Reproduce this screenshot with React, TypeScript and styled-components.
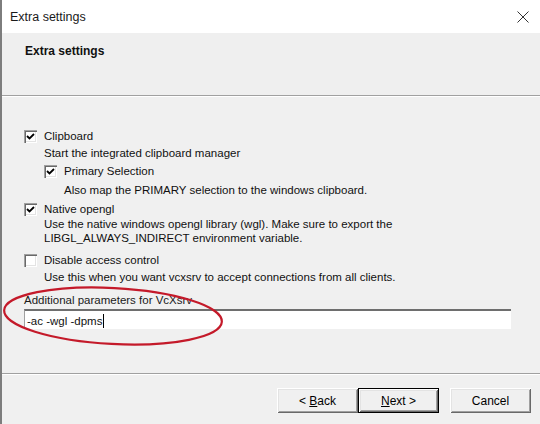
import styled, { createGlobalStyle } from 'styled-components';

const GlobalStyle = createGlobalStyle`
  html, body {
    margin: 0;
    padding: 0;
    background: #f0f0f0;
  }
  body {
    font-family: "Liberation Sans", Arial, sans-serif;
    font-size: 11.5px;
    color: #111;
  }
`;

type Option = {
  label: string;
  checked: boolean;
  indent: number;
  space: number;
  descGap: number;
  lines: string[];
};

const options: Option[] = [
  {
    label: 'Clipboard',
    checked: true,
    indent: 0,
    space: 0,
    descGap: 2,
    lines: ['Start the integrated clipboard manager'],
  },
  {
    label: 'Primary Selection',
    checked: true,
    indent: 20,
    space: 3,
    descGap: 4,
    lines: ['Also map the PRIMARY selection to the windows clipboard.'],
  },
  {
    label: 'Native opengl',
    checked: true,
    indent: 0,
    space: 4,
    descGap: 0,
    lines: [
      'Use the native windows opengl library (wgl). Make sure to export the',
      'LIBGL_ALWAYS_INDIRECT environment variable.',
    ],
  },
  {
    label: 'Disable access control',
    checked: false,
    indent: 0,
    space: 7,
    descGap: 2,
    lines: ['Use this when you want vcxsrv to accept connections from all clients.'],
  },
];

const App = () => {
  return (
    <>
      <GlobalStyle />
      <Window>
        <TitleBar>
          <WindowTitle>Extra settings</WindowTitle>
          <CloseButton>
            <svg width="12" height="12" viewBox="0 0 12 12">
              <path d="M0.5 0.5 L11.5 11.5 M11.5 0.5 L0.5 11.5" stroke="#333" strokeWidth="1" />
            </svg>
          </CloseButton>
        </TitleBar>

        <Header>
          <HeaderTitle>Extra settings</HeaderTitle>
        </Header>

        <Content>
          {options.map((opt) => (
            <OptionBlock key={opt.label} $indent={opt.indent} $space={opt.space}>
              <CheckRow>
                <CheckBox>
                  {opt.checked && (
                    <svg width="9" height="9" viewBox="0 0 9 9">
                      <path d="M1 4 L3.5 6.5 L8 2" stroke="#000" strokeWidth="1.8" fill="none" />
                    </svg>
                  )}
                </CheckBox>
                <Label>{opt.label}</Label>
              </CheckRow>
              <DescList $gap={opt.descGap}>
                {opt.lines.map((line) => (
                  <Description key={line}>{line}</Description>
                ))}
              </DescList>
            </OptionBlock>
          ))}

          <ParamLabel>Additional parameters for VcXsrv</ParamLabel>
          <ParamField>
            -ac -wgl -dpms
            <Caret />
          </ParamField>
        </Content>

        <Footer>
          <WizardButton>
            &lt; <u>B</u>ack
          </WizardButton>
          <WizardButton $default>
            <u>N</u>ext &gt;
          </WizardButton>
          <WizardButton $space={11}>Cancel</WizardButton>
        </Footer>

        <Highlight width="540" height="424" viewBox="0 0 540 424">
          <ellipse
            cx="113"
            cy="316"
            rx="109"
            ry="28"
            fill="none"
            stroke="#c41a2a"
            strokeWidth="2.2"
            transform="rotate(3 113 316)"
          />
        </Highlight>
      </Window>
    </>
  );
};

export default App;

const Window = styled.div`
  position: relative;
  width: 540px;
  height: 424px;
  box-sizing: border-box;
  border-left: 2px solid #7d7d7d;
  background: #f0f0f0;
  display: flex;
  flex-direction: column;
  overflow: hidden;
`;

const TitleBar = styled.div`
  height: 33px;
  flex-shrink: 0;
  background: #fff;
  display: flex;
  align-items: center;
  justify-content: space-between;
  padding: 0 11px 0 8px;
`;

const WindowTitle = styled.span`
  font-size: 12.5px;
  color: #1a1a1a;
`;

const CloseButton = styled.span`
  display: flex;
  width: 12px;
  height: 12px;
`;

const Header = styled.div`
  height: 63px;
  flex-shrink: 0;
  background: #efefef;
  border-bottom: 1px solid #a0a0a0;
  box-shadow: 0 1px 0 #fff;
  padding: 11px 0 0 23px;
  box-sizing: border-box;
`;

const HeaderTitle = styled.div`
  font-weight: 700;
  font-size: 12px;
  line-height: 14px;
`;

const Content = styled.div`
  flex: 1;
  padding: 32px 0 0 22px;
  display: flex;
  flex-direction: column;
  align-items: flex-start;
`;

const OptionBlock = styled.div<{ $indent: number; $space: number }>`
  margin-left: ${(p) => p.$indent}px;
  margin-top: ${(p) => p.$space}px;
`;

const CheckRow = styled.div`
  display: flex;
  align-items: center;
  gap: 7px;
  height: 16px;
`;

const CheckBox = styled.span`
  width: 13px;
  height: 13px;
  box-sizing: border-box;
  background: #fff;
  display: flex;
  align-items: center;
  justify-content: center;
  box-shadow: inset 1px 1px #a0a0a0, inset 2px 2px #696969, inset -1px -1px #fff,
    inset -2px -2px #e3e3e3;
`;

const Label = styled.span`
  line-height: 16px;
`;

const DescList = styled.div<{ $gap: number }>`
  margin: ${(p) => p.$gap}px 0 0 20px;
`;

const Description = styled.div`
  line-height: 14px;
`;

const ParamLabel = styled.div`
  margin-top: 9px;
  line-height: 14px;
  color: #1a1a1a;
`;

const ParamField = styled.div`
  margin-top: 2px;
  width: 487px;
  height: 20px;
  box-sizing: border-box;
  background: #fff;
  border-top: 2px solid #6e6e6e;
  border-left: 1px solid #a0a0a0;
  padding: 1px 0 0 2px;
  display: flex;
  align-items: center;
  line-height: 14px;
`;

const Caret = styled.span`
  display: inline-block;
  width: 1px;
  height: 14px;
  background: #000;
  margin-left: 1px;
`;

const Footer = styled.div`
  height: 51px;
  flex-shrink: 0;
  border-top: 1px solid #a0a0a0;
  box-shadow: inset 0 1px 0 #fff;
  display: flex;
  justify-content: flex-end;
  align-items: flex-start;
  padding: 14px 9px 0 0;
  box-sizing: border-box;
`;

const WizardButton = styled.button<{ $default?: boolean; $space?: number }>`
  width: 81px;
  height: 25px;
  margin-left: ${(p) => p.$space ?? 0}px;
  box-sizing: border-box;
  font-family: "Liberation Sans", Arial, sans-serif;
  font-size: 12px;
  color: #000;
  background: #f0f0f0;
  border: ${(p) => (p.$default ? '1px solid #000' : '0')};
  box-shadow: inset 1px 1px #fff, inset -1px -1px #696969, inset 2px 2px #e3e3e3,
    inset -2px -2px #a0a0a0;
  padding: 0;
`;

const Highlight = styled.svg`
  position: absolute;
  left: -2px;
  top: 0;
  pointer-events: none;
`;
